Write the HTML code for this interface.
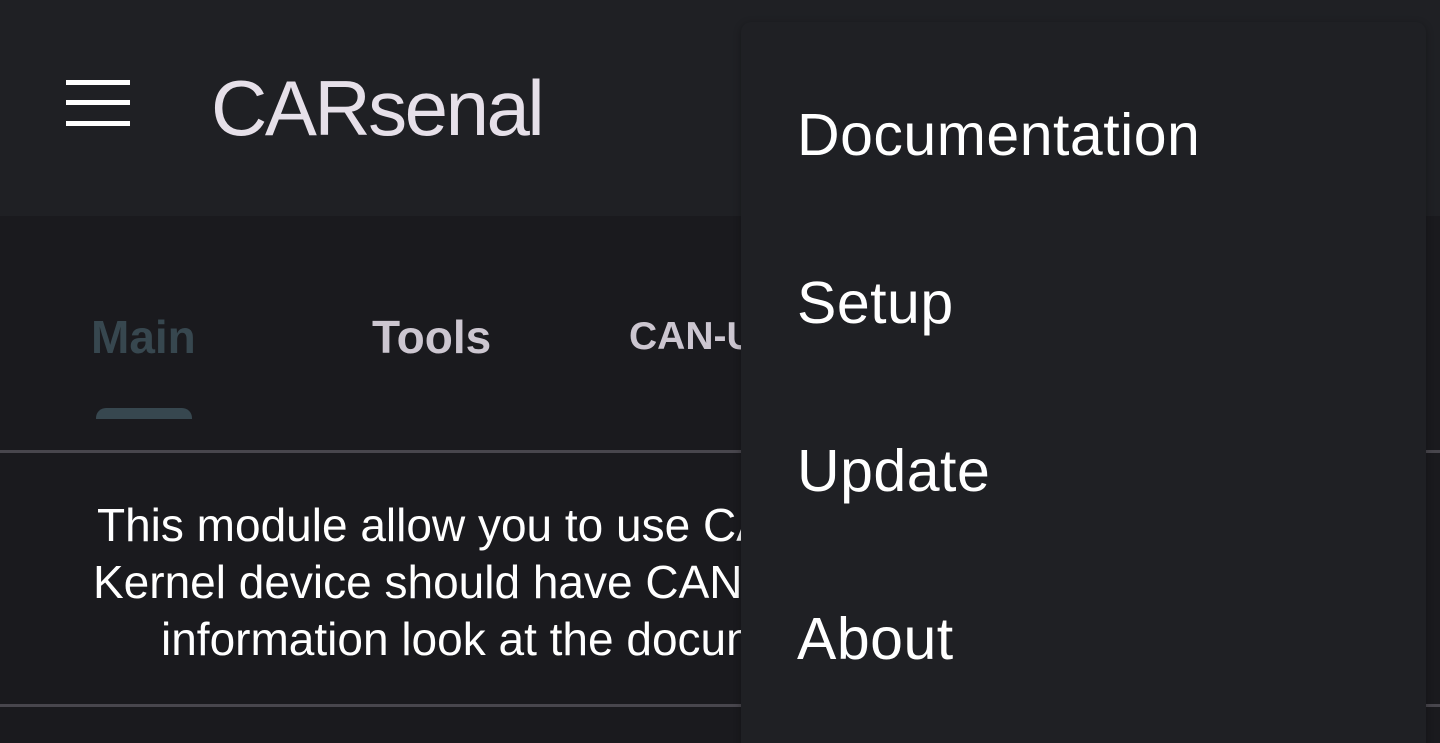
<!DOCTYPE html>
<html style="overflow:hidden;height:743px"><head><style>
body{margin:0;width:1440px;height:743px;overflow:hidden;background:#1a1a1e;font-family:"Liberation Sans",sans-serif;position:relative}
.a{position:absolute;white-space:nowrap}
</style></head><body>
<div class="a" style="left:0;top:0;width:1440px;height:216px;background:#1f2024"></div>
<div class="a" style="left:66px;top:80px;width:64px;height:5px;background:#fff"></div>
<div class="a" style="left:66px;top:100px;width:64px;height:5px;background:#fff"></div>
<div class="a" style="left:66px;top:121px;width:64px;height:5px;background:#fff"></div>
<div class="a" style="left:211px;top:63px;font-size:78px;letter-spacing:-2.5px;color:#e6e0e9;line-height:90px">CARsenal</div>
<div class="a" style="left:91px;top:312px;font-size:46px;font-weight:bold;color:#37474f;line-height:50px">Main</div>
<div class="a" style="left:372px;top:312px;font-size:46px;font-weight:bold;color:#ccc6d0;line-height:50px">Tools</div>
<div class="a" style="left:629px;top:315px;font-size:39px;font-weight:bold;color:#ccc6d0;line-height:44px">CAN-USB</div>
<div class="a" style="left:96px;top:408px;width:96px;height:11px;background:#37474f;border-radius:10px 10px 0 0"></div>
<div class="a" style="left:0;top:450px;width:1440px;height:3px;background:#48464d"></div>
<div class="a" style="left:0;top:704px;width:1440px;height:3px;background:#48464d"></div>
<div class="a" style="left:97px;top:497px;font-size:46px;color:#fff;line-height:56px">This module allow you to use CAN</div>
<div class="a" style="left:93px;top:554px;font-size:46px;color:#fff;line-height:56px">Kernel device should have CAN</div>
<div class="a" style="left:161px;top:611px;font-size:46px;color:#fff;line-height:56px">information look at the documentation</div>
<div class="a" style="left:741px;top:22px;width:685px;height:740px;background:#1f2024;border-radius:10px;box-shadow:0 2px 8px rgba(0,0,0,.3)"></div>
<div class="a" style="left:797px;top:100px;font-size:59px;letter-spacing:0.5px;color:#fff;line-height:70px">Documentation</div>
<div class="a" style="left:797px;top:268px;font-size:59px;letter-spacing:0.5px;color:#fff;line-height:70px">Setup</div>
<div class="a" style="left:797px;top:436px;font-size:59px;letter-spacing:0.5px;color:#fff;line-height:70px">Update</div>
<div class="a" style="left:797px;top:604px;font-size:59px;letter-spacing:0.5px;color:#fff;line-height:70px">About</div>
</body></html>
